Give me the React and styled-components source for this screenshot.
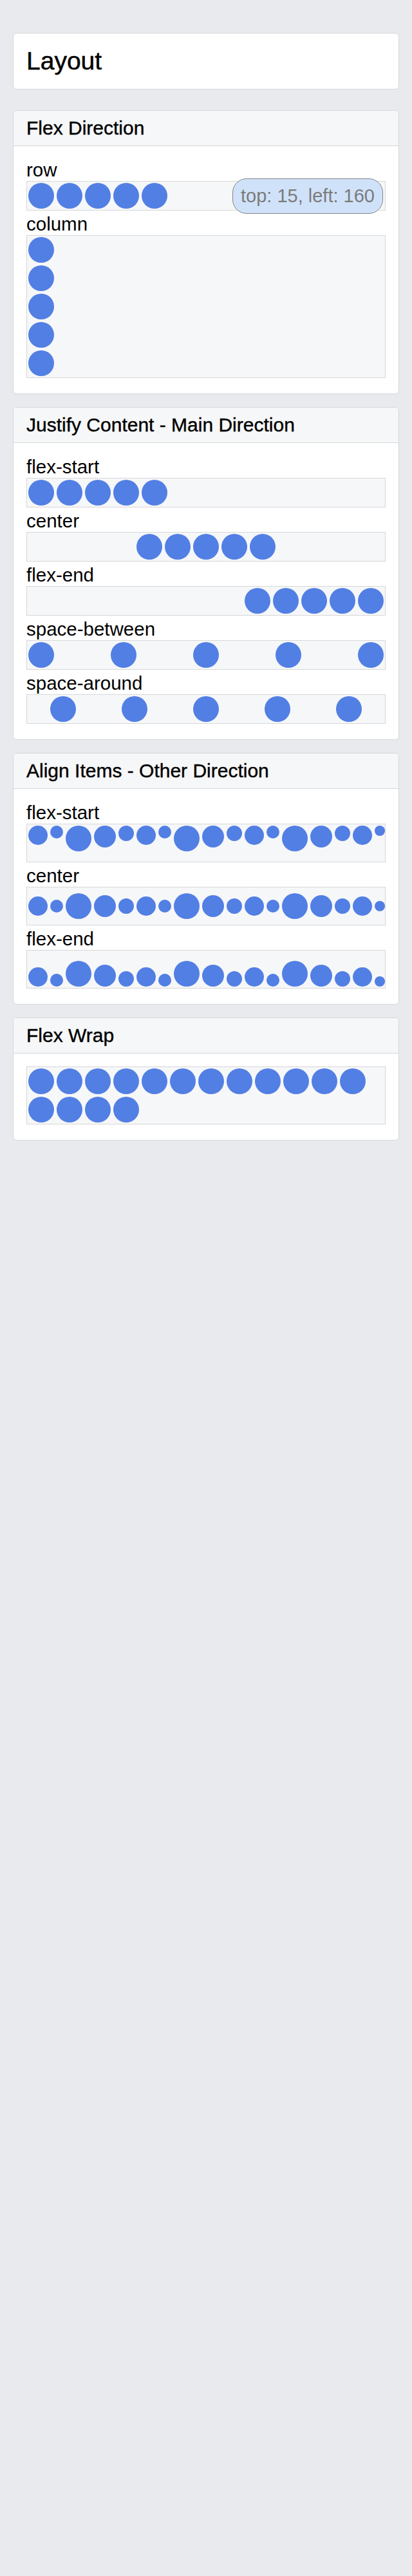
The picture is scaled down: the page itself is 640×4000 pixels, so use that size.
import styled, { createGlobalStyle } from 'styled-components';

const GlobalStyle = createGlobalStyle`
  html, body {
    margin: 0;
    padding: 0;
    background: #e9eaed;
  }
  body {
    font-family: "Liberation Sans", Arial, Helvetica, sans-serif;
    color: #000;
  }
`;

const Page = styled.div`
  padding: 51px 20px 20px;
`;

const Card = styled.section`
  background: #fff;
  border: 1px solid #d6d7da;
  border-radius: 6px;
  margin-bottom: 20px;
  overflow: hidden;
`;

const TitleCard = styled(Card)`
  padding: 20px;
  margin-bottom: 32px;
`;

const Title = styled.h1`
  margin: 0;
  font-size: 39px;
  line-height: 46px;
  font-weight: 400;
  -webkit-text-stroke: 0.5px #000;
`;

const CardHeader = styled.div`
  background: #f6f7f8;
  border-bottom: 1px solid #d6d7da;
  padding: 10px 20px;
  font-size: 30px;
  line-height: 34px;
  -webkit-text-stroke: 0.4px #000;
`;

const CardBody = styled.div`
  position: relative;
  padding: 20px;
`;

const Label = styled.div`
  font-size: 29.5px;
  line-height: 34px;
`;

const Row = styled.div`
  display: flex;
  flex-direction: ${(p) => p.$direction || 'row'};
  justify-content: ${(p) => p.$justify || 'flex-start'};
  align-items: ${(p) => p.$align || 'flex-start'};
  flex-wrap: ${(p) => (p.$wrap ? 'wrap' : 'nowrap')};
  height: ${(p) => (p.$height ? `${p.$height}px` : 'auto')};
  box-sizing: border-box;
  background: #f6f7f8;
  border: 1px solid #d6d7da;
  margin-bottom: 4px;
`;

const Circle = styled.div`
  flex-shrink: 0;
  width: ${(p) => p.$size}px;
  height: ${(p) => p.$size}px;
  margin: 2px;
  border-radius: 50%;
  background: #527fe4;
`;

const Tooltip = styled.div`
  position: absolute;
  top: 50px;
  left: 340px;
  width: 234px;
  height: 55px;
  box-sizing: border-box;
  border: 1px solid #858585;
  border-radius: 22px;
  background: #d0e2f9;
  color: #7b7b7b;
  font-size: 29px;
  line-height: 53px;
  text-align: center;
`;

const five = [0, 1, 2, 3, 4];
const alignSizes = [15, 10, 20, 17, 12, 15, 10, 20, 17, 12, 15, 10, 20, 17, 12, 15, 8];

function Circles({ count = 5, size = 40 }) {
  return Array.from({ length: count }, (_, i) => <Circle key={i} $size={size} />);
}

function AlignRow({ align }) {
  return (
    <Row $align={align} $height={60}>
      {alignSizes.map((s, i) => (
        <Circle key={i} $size={s * 2} />
      ))}
    </Row>
  );
}

export default function App() {
  return (
    <>
      <GlobalStyle />
      <Page>
        <TitleCard>
          <Title>Layout</Title>
        </TitleCard>

        <Card>
          <CardHeader>Flex Direction</CardHeader>
          <CardBody>
            <Label>row</Label>
            <Row>
              <Circles />
            </Row>
            <Label>column</Label>
            <Row $direction="column">
              <Circles />
            </Row>
            <Tooltip>top: 15, left: 160</Tooltip>
          </CardBody>
        </Card>

        <Card>
          <CardHeader>Justify Content - Main Direction</CardHeader>
          <CardBody>
            {['flex-start', 'center', 'flex-end', 'space-between', 'space-around'].map((j) => (
              <div key={j}>
                <Label>{j}</Label>
                <Row $justify={j}>
                  {five.map((i) => (
                    <Circle key={i} $size={40} />
                  ))}
                </Row>
              </div>
            ))}
          </CardBody>
        </Card>

        <Card>
          <CardHeader>Align Items - Other Direction</CardHeader>
          <CardBody>
            <Label>flex-start</Label>
            <AlignRow align="flex-start" />
            <Label>center</Label>
            <AlignRow align="center" />
            <Label>flex-end</Label>
            <AlignRow align="flex-end" />
          </CardBody>
        </Card>

        <Card>
          <CardHeader>Flex Wrap</CardHeader>
          <CardBody>
            <Row $wrap>
              <Circles count={16} />
            </Row>
          </CardBody>
        </Card>
      </Page>
    </>
  );
}
